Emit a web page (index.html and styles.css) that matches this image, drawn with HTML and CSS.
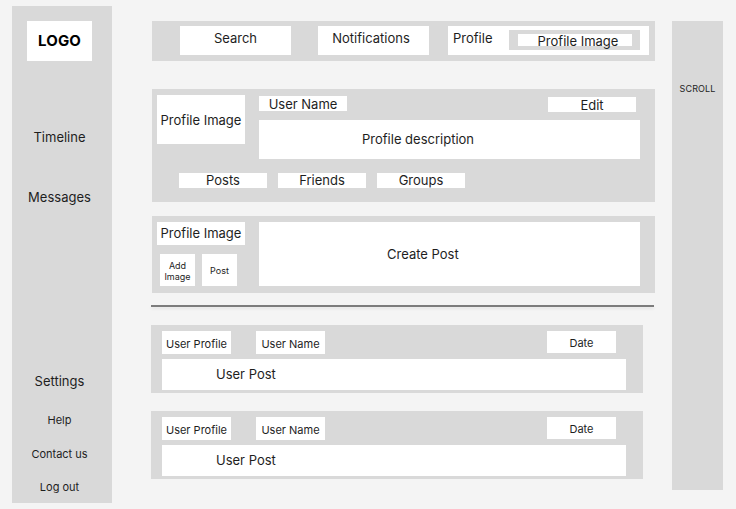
FILE: index.html
```html
<!DOCTYPE html>
<html lang="en">
<head>
<meta charset="utf-8">
<title>Social wireframe</title>
<link rel="stylesheet" href="styles.css">
</head>
<body>
<div class="page">
  <aside class="sidebar">
    <div class="logo">LOGO</div>
    <nav class="nav-main">
      <div class="nav-item nav-timeline">Timeline</div>
      <div class="nav-item nav-messages">Messages</div>
    </nav>
    <nav class="nav-bottom">
      <div class="nav-item nav-settings">Settings</div>
      <div class="nav-sm nav-help">Help</div>
      <div class="nav-sm nav-contact">Contact us</div>
      <div class="nav-sm nav-logout">Log out</div>
    </nav>
  </aside>

  <main class="main">
    <header class="topbar">
      <div class="top-btn">Search</div>
      <div class="top-btn top-notif">Notifications</div>
      <div class="top-profile">
        <span class="top-profile-label">Profile</span>
        <div class="top-profile-frame"><div class="top-profile-img">Profile Image</div></div>
      </div>
    </header>

    <section class="profile-card">
      <div class="pc-top">
        <div class="box pc-image">Profile Image</div>
        <div class="pc-right">
          <div class="pc-header">
            <div class="box pc-name">User Name</div>
            <div class="box pc-edit">Edit</div>
          </div>
          <div class="box pc-desc">Profile description</div>
        </div>
      </div>
      <div class="pc-tabs">
        <div class="box pc-tab">Posts</div>
        <div class="box pc-tab">Friends</div>
        <div class="box pc-tab">Groups</div>
      </div>
    </section>

    <section class="create-card">
      <div class="cc-left">
        <div class="box cc-image">Profile Image</div>
        <div class="cc-actions">
          <div class="box cc-btn">Add<br>Image</div>
          <div class="box cc-btn">Post</div>
        </div>
      </div>
      <div class="box cc-input">Create Post</div>
    </section>

    <div class="divider"></div>

    <article class="post">
      <div class="post-head">
        <div class="box post-chip">User Profile</div>
        <div class="box post-chip post-name">User Name</div>
        <div class="box post-chip post-date">Date</div>
      </div>
      <div class="box post-body">User Post</div>
    </article>

    <article class="post">
      <div class="post-head">
        <div class="box post-chip">User Profile</div>
        <div class="box post-chip post-name">User Name</div>
        <div class="box post-chip post-date">Date</div>
      </div>
      <div class="box post-body">User Post</div>
    </article>
  </main>

  <aside class="scroll">SCROLL</aside>
</div>
</body>
</html>
```

FILE: styles.css
```css
* { box-sizing: border-box; }

html, body {
  margin: 0;
  padding: 0;
  background: #f4f4f4;
}

body {
  font-family: Inter, "Noto Sans", "Liberation Sans", sans-serif;
  color: #1e1e1e;
  font-size: 13px;
  width: 736px;
  height: 509px;
  overflow: hidden;
}

.page {
  display: flex;
  align-items: flex-start;
  padding: 6px 0 0 12px;
}

/* ---------- sidebar ---------- */
.sidebar {
  width: 100px;
  height: 497px;
  background: #d9d9d9;
  display: flex;
  flex-direction: column;
  align-items: center;
  padding: 15px 5px 0 0;
}

.logo {
  width: 65px;
  height: 40px;
  background: #fff;
  color: #000;
  font-weight: 700;
  font-size: 15px;
  display: flex;
  align-items: center;
  justify-content: center;
  letter-spacing: 0.2px;
  padding-bottom: 2px;
}

.nav-main,
.nav-bottom {
  display: flex;
  flex-direction: column;
  align-items: center;
}

.nav-item {
  height: 20px;
  line-height: 20px;
  font-size: 13px;
  white-space: nowrap;
}

.nav-timeline { margin-top: 66px; }
.nav-messages { margin-top: 40px; }

.nav-bottom { margin-top: auto; padding-bottom: 6px; }

.nav-sm {
  height: 20px;
  line-height: 20px;
  font-size: 11px;
  white-space: nowrap;
}

.nav-help { margin-top: 19px; }
.nav-contact { margin-top: 14px; }
.nav-logout { margin-top: 13px; }

/* ---------- main column ---------- */
.main {
  width: 503px;
  margin: 15px 0 0 40px;
  display: flex;
  flex-direction: column;
}

.box {
  background: #fff;
  display: flex;
  align-items: center;
  justify-content: center;
  white-space: nowrap;
}

/* top bar */
.topbar {
  height: 40px;
  background: #d9d9d9;
  display: flex;
  align-items: flex-start;
  padding: 5px 6px 0 28px;
}

.top-btn {
  width: 111px;
  height: 29px;
  background: #fff;
  display: flex;
  justify-content: center;
  padding-top: 4px;
  line-height: 16px;
}

.top-notif { padding-right: 5px; }

.top-btn + .top-btn { margin-left: 27px; }

.top-profile {
  margin-left: 19px;
  width: 201px;
  height: 29px;
  background: #fff;
  display: flex;
  align-items: flex-start;
  justify-content: space-between;
  padding: 4px 9px 0 5px;
}

.top-profile-label {
  line-height: 16px;
}

.top-profile-frame {
  width: 131px;
  height: 20px;
  background: #d9d9d9;
  padding: 4px 8px 0 9px;
}

.top-profile-img {
  width: 114px;
  height: 12px;
  background: #fff;
  display: flex;
  justify-content: center;
  align-items: center;
  line-height: 12px;
  padding: 1px 0 0 6px;
  white-space: nowrap;
}

/* profile card */
.profile-card {
  margin-top: 28px;
  height: 113px;
  background: #d9d9d9;
  padding: 6px 15px 0 5px;
}

.pc-top {
  display: flex;
  gap: 14px;
}

.pc-image {
  width: 88px;
  height: 49px;
}

.pc-right {
  flex: 1;
  padding-top: 1px;
}

.pc-header {
  display: flex;
  justify-content: space-between;
  align-items: flex-start;
  height: 15px;
  padding-right: 4px;
}

.pc-name,
.pc-edit,
.pc-tab {
  width: 88px;
  height: 15px;
}

.pc-edit { margin-top: 1px; }

.pc-tab { padding-bottom: 2px; }

.pc-desc {
  margin-top: 9px;
  height: 39px;
  justify-content: flex-start;
  padding: 0 0 1px 103px;
}

.pc-tabs {
  display: flex;
  gap: 11px;
  margin: 14px 0 0 22px;
}

/* create post */
.create-card {
  margin-top: 14px;
  height: 77px;
  background: #d9d9d9;
  display: flex;
  gap: 14px;
  padding: 6px 15px 0 5px;
}

.cc-left {
  width: 88px;
  display: flex;
  flex-direction: column;
}

.cc-image {
  height: 23px;
  padding-bottom: 1px;
}

.cc-actions {
  display: flex;
  gap: 7px;
  margin: 9px 0 0 3px;
}

.cc-btn {
  width: 35px;
  height: 32px;
  font-size: 9px;
  line-height: 11px;
  text-align: center;
  padding-top: 1px;
}

.cc-input {
  flex: 1;
  height: 64px;
  justify-content: flex-start;
  padding-left: 128px;
}

/* divider */
.divider {
  margin: 12px 1px 0 -1px;
  height: 2px;
  background: #7c7c7c;
  box-shadow: 0 2px 3px rgba(0, 0, 0, 0.07);
}

/* posts */
.post {
  margin: 18px 0 0 -1px;
  width: 492px;
  height: 68px;
  background: #d9d9d9;
  padding: 6px 17px 0 11px;
}

.post + .post { margin-top: 18px; }

.post-head {
  display: flex;
  align-items: flex-start;
}

.post-chip {
  width: 69px;
  height: 23px;
  font-size: 11px;
  padding-top: 3px;
}

.post-name { margin-left: 25px; }

.post-date {
  margin-left: auto;
  height: 22px;
  margin-right: 10px;
  padding-top: 1px;
}

.post-body {
  margin-top: 5px;
  height: 31px;
  justify-content: flex-start;
  padding: 0 0 2px 54px;
}

/* scroll */
.scroll {
  width: 51px;
  height: 469px;
  margin: 15px 0 0 17px;
  background: #d9d9d9;
  font-size: 9px;
  text-align: center;
  padding-top: 62px;
  letter-spacing: 0.1px;
}
```
